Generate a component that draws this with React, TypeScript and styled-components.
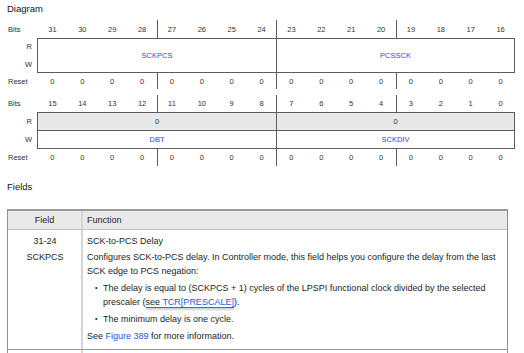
import React from 'react';
import styled, { createGlobalStyle } from 'styled-components';

// =============================================================================
// Constants
// =============================================================================

const LINE = '#5c5c5c';
const FIELD_BLUE = '#3d3dff';
const LINK_BLUE = '#2457e8';
const TEXT = '#1e1e1e';

// =============================================================================
// Styled Components
// =============================================================================

const GlobalStyle = createGlobalStyle`
  html, body {
    margin: 0;
    padding: 0;
    background: #fff;
    overflow: hidden;
  }
  body {
    font-family: "Liberation Sans", Arial, Helvetica, sans-serif;
    color: ${TEXT};
  }
`;

const Page = styled.div`
  width: 524px;
  height: 353px;
  overflow: hidden;
  padding: 0 7px;
  box-sizing: border-box;
`;

const SectionTitle = styled.h3<{ $top?: number }>`
  margin: ${(p) => p.$top ?? 0}px 0 0;
  font-size: 9.5px;
  font-weight: normal;
  line-height: 17px;
  color: #151515;
`;

const Register = styled.div`
  width: 508px;
  margin-top: 3px;
  & + & {
    margin-top: 6px;
  }
`;

const BitRow = styled.div<{ $height: number }>`
  display: grid;
  grid-template-columns: 30px repeat(16, 1fr);
  height: ${(p) => p.$height}px;
  font-size: 7.5px;
  color: #333;
`;

const RowLabel = styled.div<{ $align?: 'left' | 'right' }>`
  display: flex;
  align-items: center;
  justify-content: ${(p) => (p.$align === 'right' ? 'flex-end' : 'flex-start')};
  padding: ${(p) => (p.$align === 'right' ? '0 5px 0 0' : '0 0 0 1px')};
  font-size: 7.5px;
  color: #333;
`;

const BitCell = styled.div<{ $tick: boolean }>`
  display: flex;
  align-items: center;
  justify-content: center;
  border-left: ${(p) => (p.$tick ? `1px solid ${LINE}` : '1px solid transparent')};
`;

const BoxRow = styled.div`
  display: flex;
`;

const LabelColumn = styled.div<{ $rows: string }>`
  width: 30px;
  display: grid;
  grid-template-rows: ${(p) => p.$rows};
`;

const Box = styled.div<{ $rows: string }>`
  width: 478px;
  box-sizing: border-box;
  border: 1px solid ${LINE};
  display: grid;
  grid-template-columns: repeat(16, 1fr);
  grid-template-rows: ${(p) => p.$rows};
`;

const FieldCell = styled.div<{ $span: number; $divider: boolean; $topLine: boolean; $reserved: boolean }>`
  grid-column: span ${(p) => p.$span};
  display: flex;
  align-items: center;
  justify-content: center;
  font-size: 7.5px;
  color: ${(p) => (p.$reserved ? '#333' : FIELD_BLUE)};
  background: ${(p) => (p.$reserved ? '#e8e8e8' : '#fff')};
  border-left: ${(p) => (p.$divider ? `1px solid ${LINE}` : 'none')};
  border-top: ${(p) => (p.$topLine ? `1px solid ${LINE}` : 'none')};
`;

const Table = styled.div`
  width: 501px;
  margin-top: 14px;
  box-sizing: border-box;
  border: 1px solid #8f8f8f;
  border-top: 2px solid #9a9a9a;
  font-size: 9px;
  color: ${TEXT};
`;

const TableRow = styled.div<{ $header?: boolean }>`
  display: grid;
  grid-template-columns: 73px 1fr;
  background: ${(p) => (p.$header ? '#e9e9e9' : '#fff')};
  border-bottom: 1px solid ${(p) => (p.$header ? '#c4c4c4' : '#9a9a9a')};
`;

const Cell = styled.div<{ $center?: boolean; $header?: boolean }>`
  box-sizing: border-box;
  min-height: 18px;
  padding: ${(p) => (p.$header ? '0 4px' : '4px 3px 6px 4px')};
  height: ${(p) => (p.$header ? '18px' : 'auto')};
  line-height: ${(p) => (p.$header ? '18px' : '14px')};
  text-align: ${(p) => (p.$center ? 'center' : 'left')};
  & + & {
    border-left: 2px solid #d4d4d4;
  }
`;

const Para = styled.p<{ $gap?: number }>`
  margin: ${(p) => p.$gap ?? 0}px 0 0;
`;

const BulletList = styled.ul`
  list-style: none;
  margin: 3px 0 0;
  padding: 0;
`;

const BulletItem = styled.li`
  display: flex;
  & + & {
    margin-top: 3px;
  }
`;

const BulletDot = styled.span`
  flex: 0 0 16px;
  box-sizing: border-box;
  padding-left: 8px;
  font-size: 7px;
`;

const SeeRef = styled.span`
  border-bottom: 1.5px solid #4a5fd0;
  box-shadow: 0 2px 2px rgba(60, 60, 90, 0.25);
`;

const Link = styled.a`
  color: ${LINK_BLUE};
  text-decoration: none;
`;

// =============================================================================
// Data
// =============================================================================

interface Field {
  name: string;
  span: number;
  reserved?: boolean;
  topLine?: boolean;
  divider?: boolean;
}

interface RegisterDef {
  highBit: number;
  bitsHeight: number;
  resetHeight: number;
  labelRows: string;
  boxRows: string;
  fields: Field[];
}

const REGISTERS: RegisterDef[] = [
  {
    highBit: 31,
    bitsHeight: 18,
    resetHeight: 16,
    labelRows: '17px 18px',
    boxRows: '33px',
    fields: [
      { name: 'SCKPCS', span: 8 },
      { name: 'PCSSCK', span: 8, divider: true },
    ],
  },
  {
    highBit: 15,
    bitsHeight: 17,
    resetHeight: 17,
    labelRows: '18px 19px',
    boxRows: '17px 18px',
    fields: [
      { name: '0', span: 8, reserved: true },
      { name: '0', span: 8, reserved: true, divider: true },
      { name: 'DBT', span: 8, topLine: true },
      { name: 'SCKDIV', span: 8, topLine: true, divider: true },
    ],
  },
];

// =============================================================================
// Main Component
// =============================================================================

const RegisterDiagram = ({ reg }: { reg: RegisterDef }) => {
  const bits = Array.from({ length: 16 }, (_, i) => reg.highBit - i);
  return (
    <Register>
      <BitRow $height={reg.bitsHeight}>
        <RowLabel>Bits</RowLabel>
        {bits.map((b, i) => (
          <BitCell key={b} $tick={i > 0 && i % 4 === 0}>
            {b}
          </BitCell>
        ))}
      </BitRow>
      <BoxRow>
        <LabelColumn $rows={reg.labelRows}>
          <RowLabel $align="right">R</RowLabel>
          <RowLabel $align="right">W</RowLabel>
        </LabelColumn>
        <Box $rows={reg.boxRows}>
          {reg.fields.map((f, i) => (
            <FieldCell key={i} $span={f.span} $divider={!!f.divider} $topLine={!!f.topLine} $reserved={!!f.reserved}>
              {f.name}
            </FieldCell>
          ))}
        </Box>
      </BoxRow>
      <BitRow $height={reg.resetHeight}>
        <RowLabel>Reset</RowLabel>
        {bits.map((b, i) => (
          <BitCell key={b} $tick={i > 0 && i % 4 === 0}>
            0
          </BitCell>
        ))}
      </BitRow>
    </Register>
  );
};

const App = () => {
  return (
    <Page>
      <GlobalStyle />
      <SectionTitle>Diagram</SectionTitle>
      {REGISTERS.map((reg) => (
        <RegisterDiagram key={reg.highBit} reg={reg} />
      ))}
      <SectionTitle $top={12}>Fields</SectionTitle>
      <Table>
        <TableRow $header>
          <Cell $header $center>
            Field
          </Cell>
          <Cell $header>Function</Cell>
        </TableRow>
        <TableRow>
          <Cell $center>
            <Para>31-24</Para>
            <Para $gap={2}>SCKPCS</Para>
          </Cell>
          <Cell>
            <Para>SCK-to-PCS Delay</Para>
            <Para $gap={2}>
              Configures SCK-to-PCS delay. In Controller mode, this field helps you configure the delay from the last
              <br />
              SCK edge to PCS negation:
            </Para>
            <BulletList>
              <BulletItem>
                <BulletDot>•</BulletDot>
                <span>
                  The delay is equal to (SCKPCS + 1) cycles of the LPSPI functional clock divided by the selected
                  <br />
                  prescaler (
                  <SeeRef>
                    see <Link href="#tcr">TCR[PRESCALE]</Link>
                  </SeeRef>
                  ).
                </span>
              </BulletItem>
              <BulletItem>
                <BulletDot>•</BulletDot>
                <span>The minimum delay is one cycle.</span>
              </BulletItem>
            </BulletList>
            <Para $gap={3}>
              See <Link href="#fig389">Figure 389</Link> for more information.
            </Para>
          </Cell>
        </TableRow>
        <TableRow>
          <Cell $center />
          <Cell />
        </TableRow>
      </Table>
    </Page>
  );
};

export default App;
